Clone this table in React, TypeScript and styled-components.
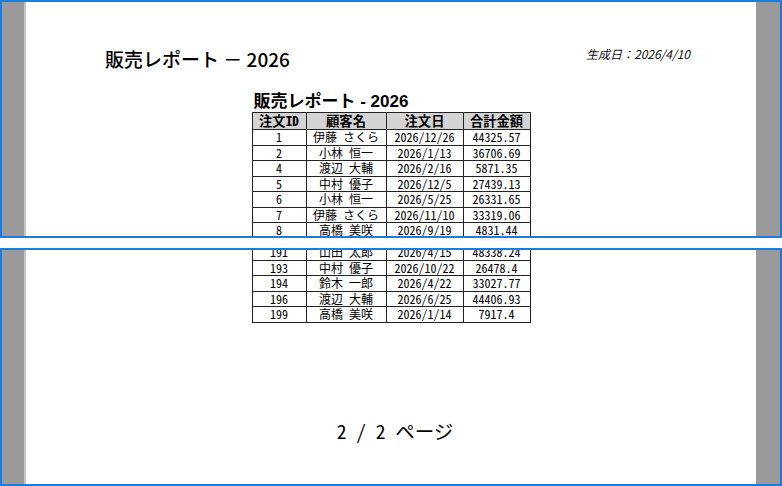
import React from 'react';
import styled, { createGlobalStyle } from 'styled-components';

const Global = createGlobalStyle`
  html, body { margin: 0; padding: 0; background: #ffffff; }
  body {
    width: 782px;
    height: 486px;
    overflow: hidden;
    font-family: "Noto Sans CJK JP", sans-serif;
    color: #000;
  }
`;

const Stack = styled.div`
  display: flex;
  flex-direction: column;
  gap: 10px;
  width: 782px;
  height: 486px;
`;

const Pane = styled.div`
  height: 238px;
  box-sizing: border-box;
  border: 2px solid #1a7be0;
  display: flex;
  overflow: hidden;
  background: #9a9a9a;
`;

const Gutter = styled.div<{ $side: 'left' | 'right' }>`
  flex: none;
  width: ${p => (p.$side === 'left' ? '22px' : '24px')};
  background: #9a9a9a;
  border-right: ${p => (p.$side === 'left' ? '2px solid #c6c6c6' : 'none')};
`;

const Page = styled.div`
  flex: 1;
  background: #ffffff;
  overflow: hidden;
  display: flex;
  flex-direction: column;
`;

const Header = styled.div`
  display: flex;
  justify-content: space-between;
  align-items: flex-start;
  padding: 44px 66px 0 79px;
`;

const Title = styled.div`
  font-size: 19px;
  line-height: 25px;
  font-weight: 500;
  white-space: pre;
`;

const Stamp = styled.div`
  font-size: 12px;
  line-height: 16px;
  font-style: italic;
  color: #111;
`;

const Report = styled.div<{ $offset?: number }>`
  align-self: center;
  margin-top: ${p => p.$offset ?? 0}px;
  display: flex;
  flex-direction: column;
`;

const Caption = styled.div`
  font-family: "Liberation Sans", "Noto Sans CJK JP", sans-serif;
  font-size: 17px;
  line-height: 20px;
  font-weight: 700;
  padding-left: 2px;
`;

const Grid = styled.table`
  border-collapse: collapse;
  table-layout: fixed;
  width: 278px;
  font-feature-settings: "hwid" 1;
`;

const HeadCell = styled.th`
  background: #d4d4d4;
  border: 1px solid #222;
  font-size: 13.3px;
  line-height: 16px;
  font-weight: 700;
  padding: 0;
  text-align: center;
  white-space: nowrap;
`;

const Cell = styled.td`
  border: 1px solid #222;
  font-size: 12px;
  line-height: 14.55px;
  padding: 0;
  text-align: center;
  white-space: pre;
`;

const Footer = styled.div`
  margin-top: 96px;
  text-align: center;
  font-size: 19.5px;
  line-height: 24px;
  white-space: pre;
  padding-left: 8px;
  font-feature-settings: "hwid" 1;
`;

type Row = [string, string, string, string];

const firstRows: Row[] = [
  ['1', '伊藤 さくら', '2026/12/26', '44325.57'],
  ['2', '小林 恒一', '2026/1/13', '36706.69'],
  ['4', '渡辺 大輔', '2026/2/16', '5871.35'],
  ['5', '中村 優子', '2026/12/5', '27439.13'],
  ['6', '小林 恒一', '2026/5/25', '26331.65'],
  ['7', '伊藤 さくら', '2026/11/10', '33319.06'],
  ['8', '高橋 美咲', '2026/9/19', '4831.44'],
];

const lastRows: Row[] = [
  ['191', '山田 太郎', '2026/4/15', '48338.24'],
  ['193', '中村 優子', '2026/10/22', '26478.4'],
  ['194', '鈴木 一郎', '2026/4/22', '33027.77'],
  ['196', '渡辺 大輔', '2026/6/25', '44406.93'],
  ['199', '高橋 美咲', '2026/1/14', '7917.4'],
];

const Cols = () => (
  <colgroup>
    <col style={{ width: 54 }} />
    <col style={{ width: 80 }} />
    <col style={{ width: 77 }} />
    <col style={{ width: 67 }} />
  </colgroup>
);

const Body = ({ rows }: { rows: Row[] }) => (
  <tbody>
    {rows.map(r => (
      <tr key={r[0]}>
        {r.map((c, i) => (
          <Cell key={i}>{c}</Cell>
        ))}
      </tr>
    ))}
  </tbody>
);

export default function App() {
  return (
    <>
      <Global />
      <Stack>
        <Pane>
          <Gutter $side="left" />
          <Page>
            <Header>
              <Title>{'販売レポート － 2026'}</Title>
              <Stamp>生成日：2026/4/10</Stamp>
            </Header>
            <Report $offset={21}>
              <Caption>販売レポート - 2026</Caption>
              <Grid>
                <Cols />
                <thead>
                  <tr>
                    <HeadCell>注文ID</HeadCell>
                    <HeadCell>顧客名</HeadCell>
                    <HeadCell>注文日</HeadCell>
                    <HeadCell>合計金額</HeadCell>
                  </tr>
                </thead>
                <Body rows={firstRows} />
              </Grid>
            </Report>
          </Page>
          <Gutter $side="right" />
        </Pane>
        <Pane>
          <Gutter $side="left" />
          <Page>
            <Report $offset={-6}>
              <Grid>
                <Cols />
                <Body rows={lastRows} />
              </Grid>
            </Report>
            <Footer>{'2 / 2 ページ'}</Footer>
          </Page>
          <Gutter $side="right" />
        </Pane>
      </Stack>
    </>
  );
}
